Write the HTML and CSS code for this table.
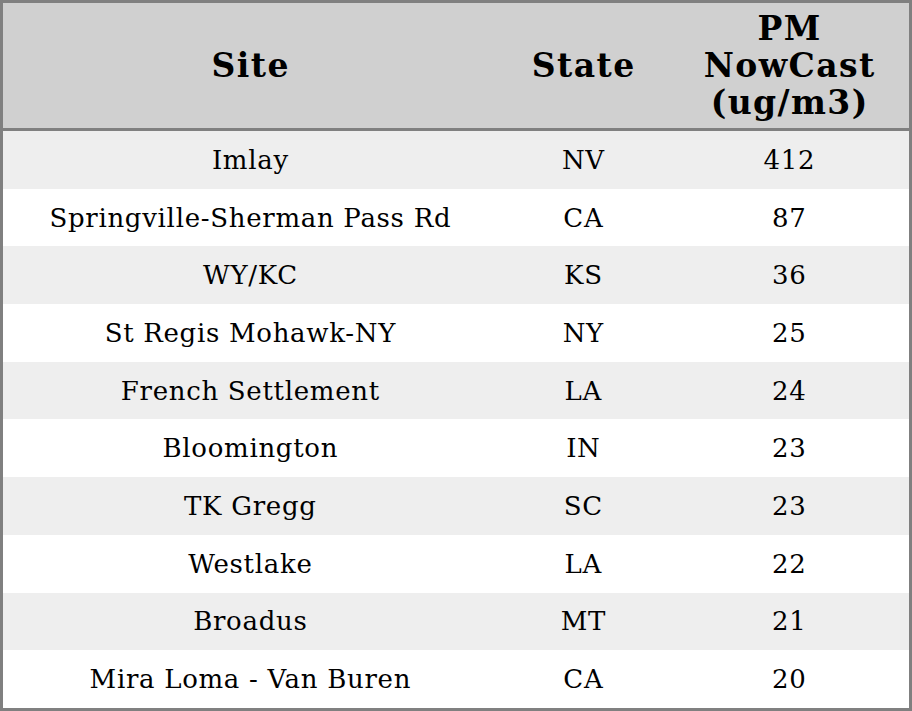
FILE: index.html
```html
<!DOCTYPE html>
<html>
<head>
<meta charset="utf-8">
<link rel="stylesheet" href="styles.css">
</head>
<body>
<table class="aq">
  <colgroup>
    <col class="c-site">
    <col class="c-state">
    <col class="c-pm">
  </colgroup>
  <thead>
    <tr class="head">
      <th>Site</th>
      <th>State</th>
      <th>PM<br>NowCast<br>(ug/m3)</th>
    </tr>
  </thead>
  <tbody>
    <tr class="odd"><td>Imlay</td><td>NV</td><td>412</td></tr>
    <tr><td>Springville-Sherman Pass Rd</td><td>CA</td><td>87</td></tr>
    <tr class="odd"><td>WY/KC</td><td>KS</td><td>36</td></tr>
    <tr><td>St Regis Mohawk-NY</td><td>NY</td><td>25</td></tr>
    <tr class="odd"><td>French Settlement</td><td>LA</td><td>24</td></tr>
    <tr><td>Bloomington</td><td>IN</td><td>23</td></tr>
    <tr class="odd"><td>TK Gregg</td><td>SC</td><td>23</td></tr>
    <tr><td>Westlake</td><td>LA</td><td>22</td></tr>
    <tr class="odd"><td>Broadus</td><td>MT</td><td>21</td></tr>
    <tr><td>Mira Loma - Van Buren</td><td>CA</td><td>20</td></tr>
  </tbody>
</table>
</body>
</html>
```

FILE: styles.css
```css
html, body {
  margin: 0;
  padding: 0;
  background: #ffffff;
}

.aq {
  border-collapse: separate;
  border-spacing: 0;
  border: 3px solid #808080;
  width: 912px;
  table-layout: fixed;
  font-family: "DejaVu Serif", serif;
  color: #000;
}

.c-site { width: 494px; }
.c-state { width: 172px; }
.c-pm { width: 240px; }

.aq th {
  background: #d0d0d0;
  font-size: 33px;
  font-weight: bold;
  line-height: 37px;
  letter-spacing: 1.4px;
  padding: 0 0 0 1.4px;
  height: 125px;
  text-align: center;
  vertical-align: middle;
  border-bottom: 3px solid #808080;
}

.aq td {
  font-size: 26px;
  letter-spacing: 0.7px;
  padding: 0 0 0 0.7px;
  text-align: center;
  vertical-align: middle;
  background: #ffffff;
}

.aq tbody tr {
  height: 57.7px;
}

.aq tr.odd td {
  background: #eeeeee;
}
```
